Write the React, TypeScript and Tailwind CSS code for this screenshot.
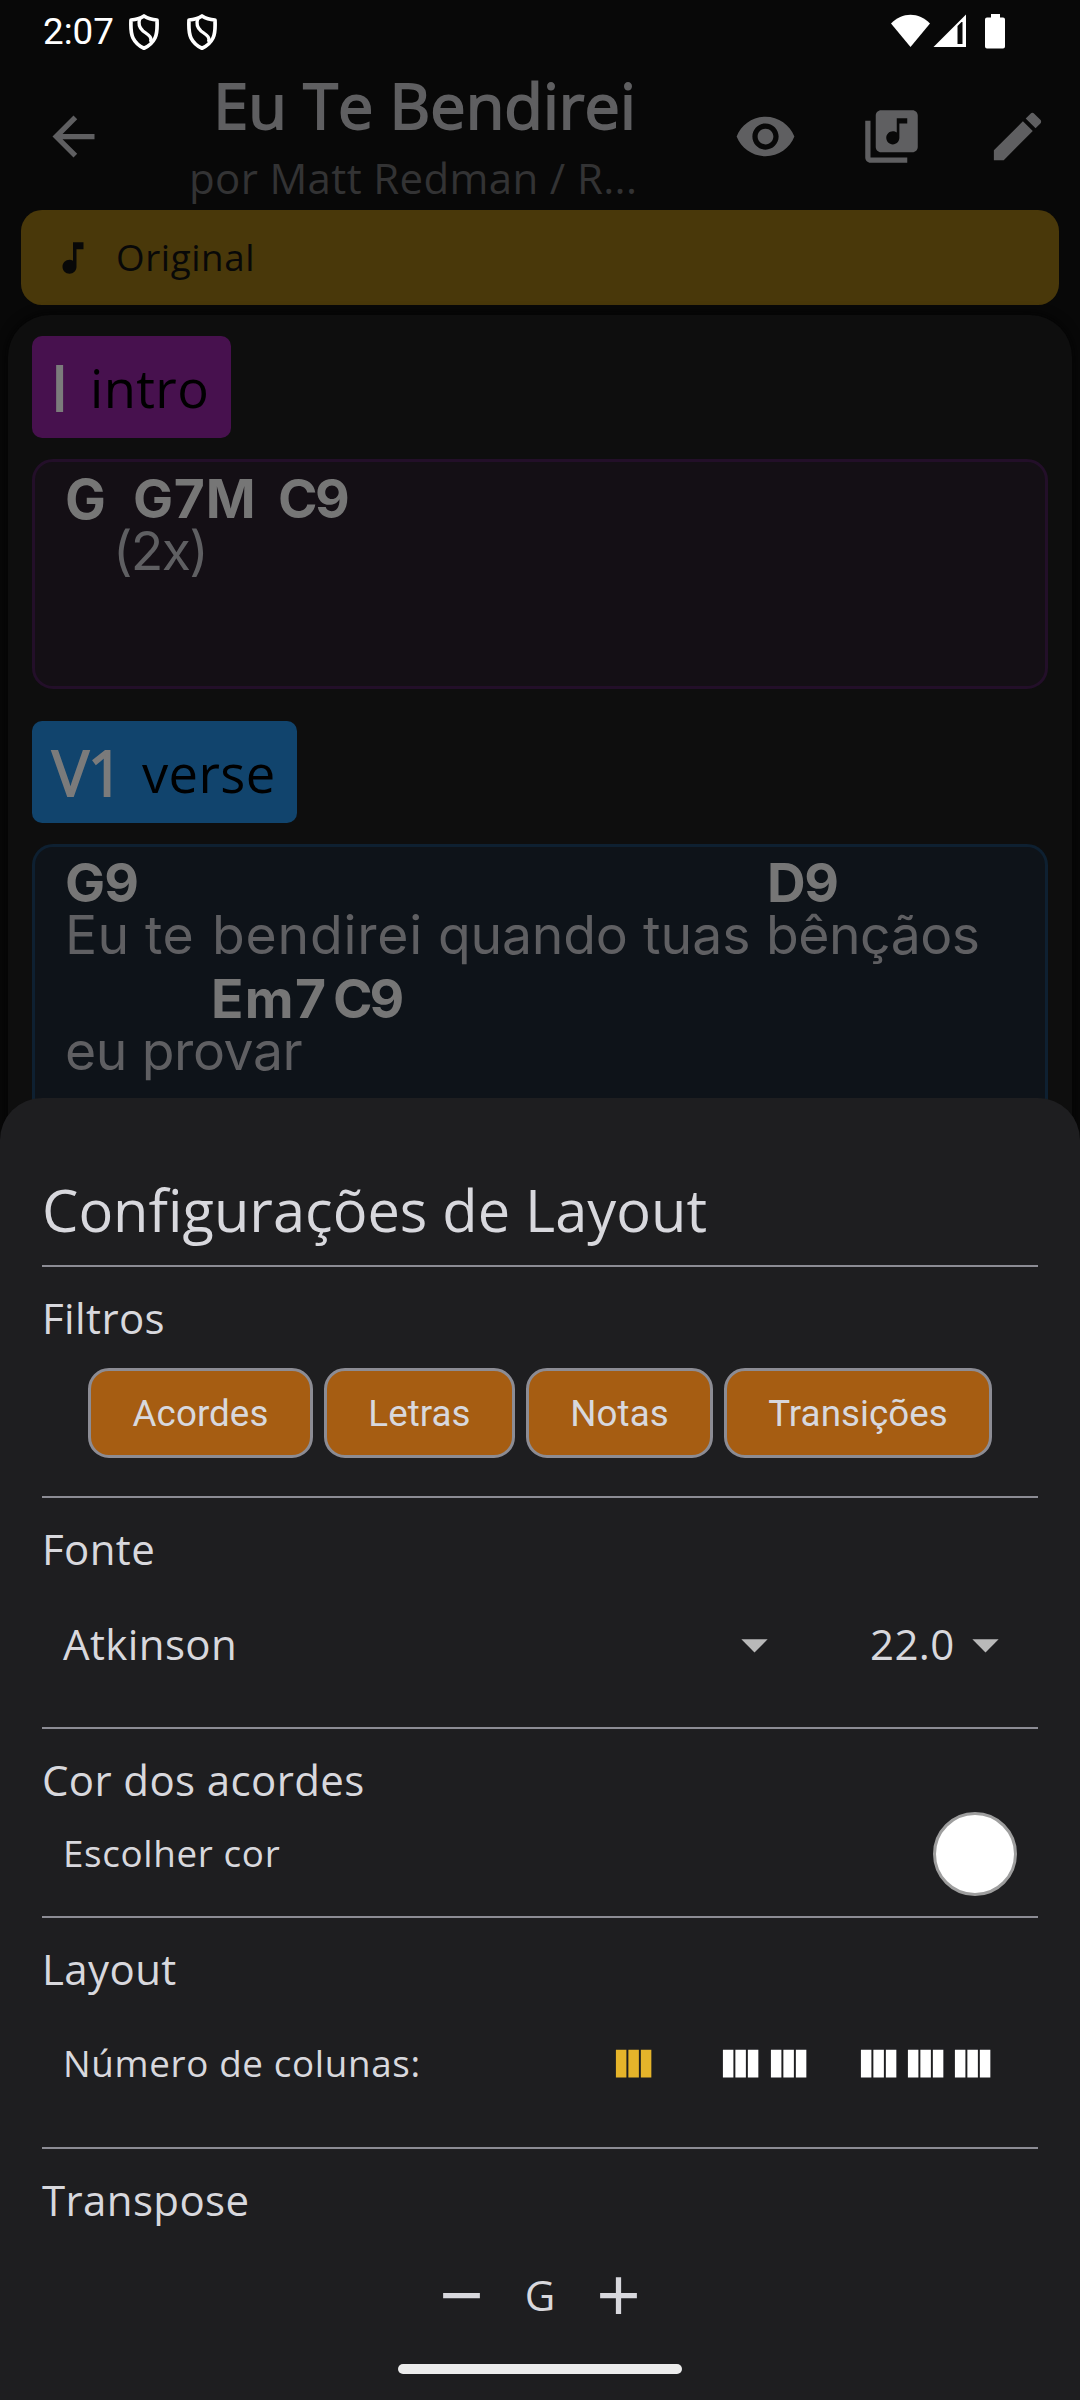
import React from "react";

type IconProps = { d: string; size: string };

function Icon({ d, size }: IconProps) {
  return (
    <svg viewBox="0 0 24 24" className={`${size} shrink-0`} fill="currentColor">
      <path d={d} />
    </svg>
  );
}

const paths = {
  back: "M20 11H7.83l5.59-5.59L12 4l-8 8 8 8 1.41-1.41L7.83 13H20v-2z",
  eye: "M12 4.5C7 4.5 2.73 7.61 1 12c1.73 4.39 6 7.5 11 7.5s9.27-3.11 11-7.5c-1.73-4.39-6-7.5-11-7.5zM12 17c-2.76 0-5-2.24-5-5s2.24-5 5-5 5 2.24 5 5-2.24 5-5 5zm0-8c-1.66 0-3 1.34-3 3s1.34 3 3 3 3-1.34 3-3-1.34-3-3-3z",
  library:
    "M20 2H8c-1.1 0-2 .9-2 2v12c0 1.1.9 2 2 2h12c1.1 0 2-.9 2-2V4c0-1.1-.9-2-2-2zm-2 5h-3v5.5c0 1.38-1.12 2.5-2.5 2.5S10 13.88 10 12.5s1.12-2.5 2.5-2.5c.57 0 1.08.19 1.5.51V5h4v2zM4 6H2v14c0 1.1.9 2 2 2h14v-2H4V6z",
  edit: "M3 17.25V21h3.75L17.81 9.94l-3.75-3.75L3 17.25zM20.71 7.04c.39-.39.39-1.02 0-1.41l-2.34-2.34c-.39-.39-1.02-.39-1.41 0l-1.83 1.83 3.75 3.75 1.83-1.83z",
  note: "M12 3v10.55c-.59-.34-1.27-.55-2-.55-2.21 0-4 1.79-4 4s1.79 4 4 4 4-1.79 4-4V7h4V3h-6z",
  caret: "M7 10l5 5 5-5z",
  columns: "M14.67 5v14H9.33V5h5.34zm1 14H21V5h-5.33v14zm-7-14H3v14h5.33V5z",
  minus: "M19 13H5v-2h14v2z",
  plus: "M19 13h-6v6h-2v-6H5v-2h6V5h2v6h6v2z",
};

function Shield() {
  return (
    <svg viewBox="0 0 30 36" className="h-[36px] w-[30px]" fill="none" stroke="white" strokeWidth="3.7" strokeLinejoin="round">
      <path d="M15 2 C11 4.6 6.500 5.700 2 6 C1.600 14 1.600 19 4 24 C6.500 29 11 32.500 15 34.300 C19 32.500 23.500 29 26 24 C28.400 19 28.400 14 28 6 C23.500 5.700 19 4.600 15 2 Z" />
      <path d="M11 4 C8.800 10 10 13.500 14 17 C18.500 20.500 23.500 22.500 21.500 28" strokeWidth="3.300" />
    </svg>
  );
}

function StatusBar() {
  return (
    <div className="flex h-[63px] items-center pl-[43px] pr-[75px] text-white">
      <span className="w-[86px] font-[Roboto] text-[36.75px] leading-[63px]">2:07</span>
      <Shield />
      <span className="w-[28px]" />
      <Shield />
      <svg viewBox="0 0 114 36" className="ml-auto h-[36px] w-[114px]" fill="white">
        <path d="M0 9.500 C11 -2.300 28 -2.300 39 9.500 L19.500 33 Z" />
        <path fillRule="evenodd" d="M42.500 33 L75 0.500 V33 Z M66.500 12 V30 H71.500 V8 L70.500 8 Z" />
        <path d="M100 0 h9 v3.500 h3 q2 0 2 2 v27 q0 2 -2 2 h-16 q-2 0 -2 -2 v-27 q0 -2 2 -2 h4 z" />
      </svg>
    </div>
  );
}

function TopBar() {
  return (
    <div className="flex h-[147px] items-center text-[#5f5f61]">
      <div className="w-[147px] pl-[42px]">
        <Icon d={paths.back} size="size-[63px]" />
      </div>
      <div className="w-[555px]">
        <h1 className="h-[82px] text-center text-[63px] leading-[83px] [-webkit-text-stroke:1.8px]">Eu Te Bendirei</h1>
        <p className="h-[65px] pl-[42px] text-[42px] leading-[66px] tracking-[0.36px] text-[#333334]">por Matt Redman / R...</p>
      </div>
      <div className="ml-[32px] flex gap-[63px]">
        <Icon d={paths.eye} size="size-[63px]" />
        <Icon d={paths.library} size="size-[63px]" />
        <Icon d={paths.edit} size="size-[63px]" />
      </div>
    </div>
  );
}

function Lyric({ children, className = "" }: { children: React.ReactNode; className?: string }) {
  return (
    <p className={`flex h-[52px] whitespace-pre font-[Inter] text-[53.5px] leading-[52px] text-[#5f5f62] ${className}`}>
      {children}
    </p>
  );
}

function Chords({ children }: { children: React.ReactNode }) {
  return <div className="flex h-[52px] font-[Inter] text-[53.5px] font-bold leading-[52px] text-[#767676]">{children}</div>;
}

function SongSheet() {
  return (
    <section className="mx-[8px] mt-[10px] h-[900px] rounded-t-[42px] bg-[#0e0e0e] px-[24px] pt-[21px] shadow-[0_0_12px_#030303]">
      <div className="flex h-[102px] w-[199px] rounded-[10px] bg-[#47114e]">
        <span className="ml-[19px] w-[39px] text-[62px] leading-[102px] text-[#7b7b7b] [-webkit-text-stroke:1.8px]">I</span>
        <span className="text-[52.5px] leading-[103px] tracking-[0.39px] text-black">intro</span>
      </div>
      <div className="mt-[21px] h-[230px] rounded-[21px] border-[3px] border-[#230f29] bg-[#140f15] pl-[30px] pt-[11px]">
        <Chords>
          <span className="w-[68px] text-[54.5px]">G</span>
          <span className="w-[145px] tracking-[0.7px]">G7M</span>
          <span className="tracking-[-2.5px]">C9</span>
        </Chords>
        <Lyric className="pl-[48px] tracking-[-1.7px]">(2x)</Lyric>
      </div>
      <div className="mt-[32px] flex h-[102px] w-[265px] rounded-[10px] bg-[#11446d]">
        <span className="ml-[20px] w-[90px] text-[62px] leading-[102px] tracking-[-1.2px] text-[#7b7b7b] [-webkit-text-stroke:1.8px]">V1</span>
        <span className="text-[52.5px] leading-[103px] tracking-[0.39px] text-black">verse</span>
      </div>
      <div className="mt-[21px] h-[300px] rounded-t-[21px] border-[3px] border-b-0 border-[#0e2031] bg-[#0e1319] pl-[30px] pt-[10px]">
        <Chords>
          <span className="w-[702px] tracking-[-1px]">G9</span>
          <span className="tracking-[-1.5px]">D9</span>
        </Chords>
        <Lyric>
          <span className="w-[147px] tracking-[0.4px]">Eu te </span>
          <span className="w-[226px] tracking-[0.8px]">bendirei </span>
          <span className="w-[205px] tracking-[-0.2px]">quando </span>
          <span className="w-[123px]">tuas </span>
          <span className="tracking-[-0.5px]">bênçãos</span>
        </Lyric>
        <div className="mt-[12px]">
          <Chords>
            <span className="ml-[146px] w-[122px] tracking-[1.3px]">Em7</span>
            <span className="tracking-[-3px]">C9</span>
          </Chords>
          <Lyric className="tracking-[-0.4px]">eu provar</Lyric>
        </div>
      </div>
    </section>
  );
}

function Section({ title, height, children }: { title: string; height: string; children: React.ReactNode }) {
  return (
    <section className={`${height} border-t-2 border-[#8c8c94]`}>
      <h3 className="mt-[22px] h-[57px] text-[42px] leading-[57px] tracking-[0.39px]">{title}</h3>
      {children}
    </section>
  );
}

function FilterButton({ label, width }: { label: string; width: string }) {
  return (
    <button
      className={`${width} h-[90px] rounded-[21px] border-[3px] border-[#8c8c94] bg-[#a65d12] text-center font-[Roboto] text-[36.75px] leading-[86px] tracking-[0.05px]`}
    >
      {label}
    </button>
  );
}

function ColumnOption({ count, color }: { count: number; color: string }) {
  return (
    <div className={`flex ${color}`}>
      {Array.from({ length: count }, (_, i) => (
        <Icon key={i} d={paths.columns} size="size-[47.25px]" />
      ))}
    </div>
  );
}

function LayoutSheet() {
  return (
    <div className="absolute inset-x-0 bottom-0 flex h-[1302px] flex-col rounded-t-[42px] bg-[#1e1e20] px-[42px] pt-[73px] text-[#d8d8dd]">
      <h2 className="h-[94px] text-[57.75px] leading-[77px]">Configurações de Layout</h2>
      <Section title="Filtros" height="h-[231px]">
        <div className="mt-[22px] flex justify-center gap-[11px]">
          <FilterButton label="Acordes" width="w-[225px]" />
          <FilterButton label="Letras" width="w-[191px]" />
          <FilterButton label="Notas" width="w-[187px]" />
          <FilterButton label="Transições" width="w-[268px]" />
        </div>
      </Section>
      <Section title="Fonte" height="h-[231px]">
        <div className="mt-[22px] flex h-[90px] items-center pl-[21px] text-[42px] leading-[88px] tracking-[0.39px]">
          <span className="w-[660px] shrink-0">Atkinson</span>
          <Icon d={paths.caret} size="size-[63px] text-[#b9b9b9]" />
          <span className="ml-[84px] w-[84px] shrink-0">22.0</span>
          <Icon d={paths.caret} size="size-[63px] text-[#b9b9b9]" />
        </div>
      </Section>
      <Section title="Cor dos acordes" height="h-[189px]">
        <div className="mt-[4px] flex h-[84px] items-center justify-between px-[21px]">
          <span className="pb-[2px] text-[36.75px] leading-[80px] tracking-[0.66px]">Escolher cor</span>
          <span className="size-[84px] rounded-full border-[3px] border-[#9e9e9e] bg-white" />
        </div>
      </Section>
      <Section title="Layout" height="h-[231px]">
        <div className="mt-[22px] flex h-[90px] items-center pl-[21px]">
          <span className="w-[547px] shrink-0 pb-[2px] text-[36.75px] leading-[88px] tracking-[0.66px]">Número de colunas:</span>
          <ColumnOption count={1} color="mr-[60px] text-[#e5b42a]" />
          <ColumnOption count={2} color="mr-[43px] text-white" />
          <ColumnOption count={3} color="text-white" />
        </div>
      </Section>
      <Section title="Transpose" height="h-[217px]">
        <div className="mt-[36px] flex h-[63px] items-center justify-center">
          <Icon d={paths.minus} size="size-[63px]" />
          <span className="w-[94px] pb-[2px] text-center text-[42px] leading-[61px]">G</span>
          <Icon d={paths.plus} size="size-[63px]" />
        </div>
      </Section>
      <div className="h-[10px] w-[284px] shrink-0 self-center rounded-[5px] bg-[#ececec]" />
    </div>
  );
}

export default function App() {
  return (
    <main className="relative h-[2400px] w-[1080px] overflow-hidden bg-[#080808] font-['Open_Sans',sans-serif]">
      <StatusBar />
      <TopBar />
      <div className="mx-[21px] flex h-[95px] items-center rounded-[21px] bg-[#49380a] pl-[31px] text-[#080808]">
        <Icon d={paths.note} size="size-[42px]" />
        <span className="ml-[22px] pb-[2px] text-[36.75px] leading-[92px] tracking-[0.6px]">Original</span>
      </div>
      <SongSheet />
      <LayoutSheet />
    </main>
  );
}
